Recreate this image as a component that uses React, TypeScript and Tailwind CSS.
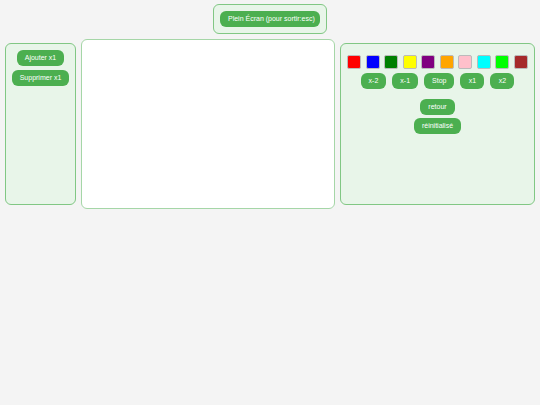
const swatches = ["#ff0000", "#0000ff", "#008000", "#ffff00", "#800080", "#ffa500", "#ffc0cb", "#00ffff", "#00ff00", "#a52a2a"];

const speeds = ["x-2", "x-1", "Stop", "x1", "x2"];

const Pill = ({ label, className = "" }: { label: string; className?: string }) => (
    <button className={`h-4 whitespace-nowrap rounded-[6px] bg-[#4caf50] px-2 text-[7px] leading-4 text-white ${className}`}>
        {label}
    </button>
)

const App = () => {
    return (
        <div className="min-h-[405px] w-[540px] bg-[#f4f4f4] font-['Liberation_Sans',Arial,sans-serif]">
            <div className="flex justify-center pt-1">
                <div className="flex h-[30px] w-[114px] items-center justify-center rounded-[6px] border border-[#81c784] bg-[#e8f5e9]">
                    <Pill label="Plein Écran (pour sortir:esc)" className="w-[100px] px-0 text-[6.5px]" />
                </div>
            </div>

            <div className="mt-[5px] flex items-center gap-[5px] px-[5px]">
                <div className="flex h-[162px] w-[71px] flex-col items-center gap-1 rounded-[6px] border border-[#81c784] bg-[#e8f5e9] pt-[6px]">
                    <Pill label="Ajouter x1" />
                    <Pill label="Supprimer x1" />
                </div>

                <div className="h-[170px] w-[254px] rounded-[6px] border border-[#a5d6a7] bg-white" />

                <div className="flex h-[162px] w-[195px] flex-col items-center rounded-[6px] border border-[#81c784] bg-[#e8f5e9] pt-[11px]">
                    <div className="flex w-full justify-between px-[6px]">
                        {swatches.map((c) => (
                            <div key={c} className="size-[14px] rounded-[2px] border border-[#bbb]" style={{ backgroundColor: c }} />
                        ))}
                    </div>
                    <div className="mt-1 flex gap-[6px]">
                        {speeds.map((s) => (
                            <Pill key={s} label={s} className="min-w-[24px]" />
                        ))}
                    </div>
                    <div className="mt-[10px] flex flex-col items-center gap-[3px]">
                        <Pill label="retour" />
                        <Pill label="réinitialisé" />
                    </div>
                </div>
            </div>
        </div>
    )
}

export default App;
